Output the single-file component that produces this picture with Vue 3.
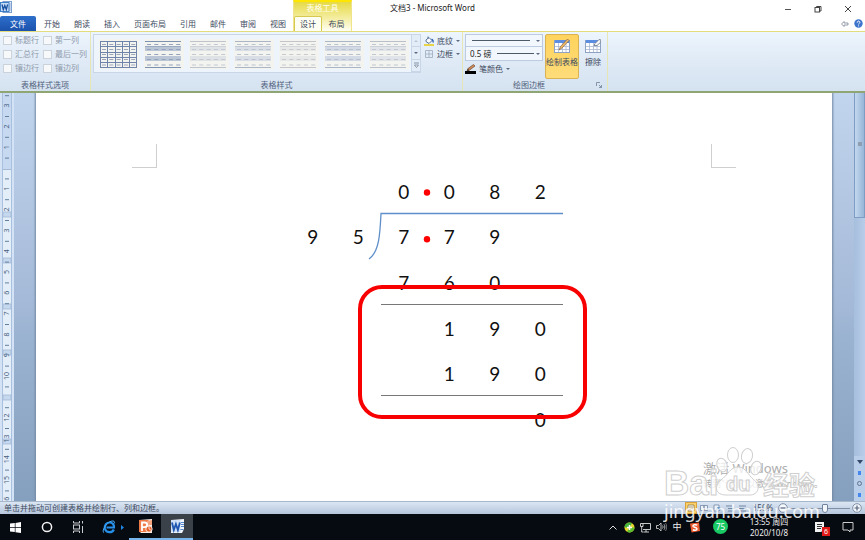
<script setup>
import { ref } from 'vue'

const tabs = ['开始', '朗读', '插入', '页面布局', '引用', '邮件', '审阅', '视图']
const options = ['标题行', '第一列', '汇总行', '最后一列', '镶边行', '镶边列']
const weight = ref('0.5')

const thumbs = [
  { grid: true, line: '#6f84ab', band: 'none', dash: '#9aa5b8' },
  { line: '#7c90b0', band: '#bac5d6', dash: '#94a3bb' },
  { line: '#bfc4cc', band: '#dfe3e6', dash: '#c3c9d2' },
  { line: '#abb5c5', band: '#d9dee6', dash: '#b9c2cf' },
  { line: '#c3c5c9', band: '#e6e7e7', dash: '#c6c9ce' },
  { line: '#a9b6ca', band: '#d3dae5', dash: '#b7c0ce' },
  { line: '#b9c0cb', band: '#e0e4e8', dash: '#c0c7d1' }
]

const rulerOrigin = 75
const rulerUnit = 20.8
const rulerNumbers = [-3, -2, -1, 1, 2, 3, 4, 5, 6, 7, 8, 9, 10, 12, 13, 14, 15, 16]
const rulerTicks = Array.from({ length: 20 }, (_, i) => i - 4 + 0.5)
const rulerMarkers = [119, 165, 211, 257, 302, 346]

const rows = [
  ['', '', '0', '0', '8', '2'],
  ['9', '5', '7', '7', '9', ''],
  ['', '', '7', '6', '0', ''],
  ['', '', '', '1', '9', '0'],
  ['', '', '', '1', '9', '0'],
  ['', '', '', '', '', '0']
]
</script>

<template>
  <div class="window">
    <header class="head">
      <div class="app-mark">
        <svg width="12" height="12" viewBox="0 0 12 12">
          <rect x="3" y="0.5" width="8.5" height="11" fill="#eef4fc" stroke="#7d9fd0" />
          <path d="M9 3h2M9 5h2M9 7h2M9 9h2" stroke="#7d9fd0" stroke-width="0.8" />
          <rect x="0.5" y="1.5" width="8.5" height="9" fill="#c6dcf6" stroke="#3f7fc8" />
          <path d="M2 3.5l1.3 5L4.8 4.5l1.5 4 1.3-5" fill="none" stroke="#174f9e" stroke-width="1.3" />
        </svg>
      </div>
      <h1 class="title">文档3 - Microsoft Word</h1>
      <nav class="tabs">
        <button class="tab file">文件</button>
        <button v-for="t in tabs" :key="t" class="tab">{{ t }}</button>
      </nav>
      <div class="context">
        <span class="context-name">表格工具</span>
        <div class="context-tabs">
          <button class="tab current">设计</button>
          <button class="tab">布局</button>
        </div>
      </div>
      <div class="controls">
        <button aria-label="最小化"><svg width="8" height="8" viewBox="0 0 8 8"><path d="M1 4.5h6" stroke="#555" /></svg></button>
        <button aria-label="还原"><svg width="8" height="8" viewBox="0 0 8 8" fill="none" stroke="#444"><path d="M2.5 2V1.5h4.500v4.500H6" /><rect x="1" y="2.500" width="4.500" height="4.500" /></svg></button>
        <button aria-label="关闭"><svg width="8" height="8" viewBox="0 0 8 8"><path d="M1 1l6 6M7 1L1 7" stroke="#444" /></svg></button>
      </div>
      <div class="help">
        <button aria-label="功能区最小化"><svg width="8" height="8" viewBox="0 0 8 8"><path d="M.5 4l2.500-2.500v1.500h4v2H3v1.500z" fill="#fff" stroke="#7b8696" stroke-width="0.8" /></svg></button>
        <button aria-label="帮助"><svg width="9" height="9" viewBox="0 0 9 9"><circle cx="4.500" cy="4.500" r="4.200" fill="#3d74cc" /><path d="M3.200 3.600c0-2 2.800-1.900 2.700-.200C5.800 4.400 4.600 4.300 4.600 5.500M4.600 6.400v1" fill="none" stroke="#fff" stroke-width="1" /></svg></button>
      </div>
    </header>

    <section class="ribbon">
      <div class="group">
        <div class="options">
          <label v-for="o in options" :key="o" class="option"><input type="checkbox" />{{ o }}</label>
        </div>
        <h2>表格样式选项</h2>
      </div>

      <div class="group styles">
        <div class="row">
          <div class="gallery">
            <button v-for="(s, i) in thumbs" :key="i" class="thumb" :aria-label="'表格样式 ' + (i + 1)">
              <svg width="40" height="30" viewBox="0 0 40 30">
                <rect width="40" height="30" fill="#f3f4f0" />
                <template v-if="!s.grid">
                  <rect x="1" y="7" width="36" height="5" :fill="s.band" />
                  <rect x="1" y="17" width="36" height="5" :fill="s.band" />
                  <path d="M1 2.500h36M1 28.500h36" :stroke="s.line" />
                  <path d="M1 7.500h36" :stroke="s.line" stroke-opacity="0.5" />
                </template>
                <path v-else d="M1 2.500h37M1 7.500h37M1 13.500h37M1 18.500h37M1 23.500h37M1 28.500h37M1.500 2v27M8.500 2v27M16.500 2v27M23.500 2v27M30.500 2v27M37.500 2v27" :stroke="s.line" />
                <path d="M3 5.500h35M3 10.500h35M3 15.500h35M3 20.500h35M3 26h35" :stroke="s.dash" stroke-dasharray="4 3.300" />
              </svg>
            </button>
            <div class="scroller">
              <button aria-label="上一行"><i class="caret up faint"></i></button>
              <button aria-label="下一行"><i class="caret"></i></button>
              <button aria-label="其他"><svg width="5" height="6" viewBox="0 0 5 6"><path d="M0 1h5M.5 3h4L2.500 5.500z" fill="#fff" stroke="#6d7d94" stroke-width="0.8" /></svg></button>
            </div>
          </div>
          <div class="stack">
            <button class="tool">
              <svg width="10" height="10" viewBox="0 0 10 10"><path d="M2 4l3-2.500 3 3-3 3-3-2z" fill="#fff" stroke="#56719b" /><path d="M4 3V.5" stroke="#56719b" /><path d="M7.500 3.500c1.500 0 1.800 1.500 1.500 3" fill="none" stroke="#2f62b0" stroke-width="1.400" /><rect y="8" width="10" height="2" fill="#e8d44a" /></svg>
              底纹<i class="caret"></i>
            </button>
            <button class="tool">
              <svg width="10" height="10" viewBox="0 0 10 10"><path d="M1.500 1.500h7v7h-7zM5 1v8M1 5h8" fill="none" stroke="#aab7c9" /></svg>
              边框<i class="caret"></i>
            </button>
          </div>
        </div>
        <h2>表格样式</h2>
      </div>

      <div class="group">
        <div class="row pens">
          <div class="pen-stack">
            <label class="picker">
              <select aria-label="笔样式"><option></option></select>
              <span class="sample wide"></span><i class="caret"></i>
            </label>
            <label class="picker">
              <select v-model="weight" aria-label="笔划粗细"><option value="0.5">0.5 磅</option></select>
              <span class="sample"></span><i class="caret"></i>
            </label>
            <button class="tool pen">
              <svg width="11" height="10" viewBox="0 0 11 10"><path d="M2 7l1-2.500L8.500.5 10 2 4 6.500z" fill="#d18a52" stroke="#6b4a3c" stroke-width="0.700" /><path d="M2 7l1-2.500 1 2z" fill="#333" /><rect y="7" width="11" height="3" fill="#000" /></svg>
              笔颜色<i class="caret"></i>
            </button>
          </div>
          <button class="big active">
            <svg width="16" height="16" viewBox="0 0 16 16"><rect x=".5" y="2.500" width="15" height="12" fill="#fff" stroke="#8ea3c4" /><rect x="1" y="2" width="14" height="3" fill="#5b8ee0" /><path d="M1 8.500h14M1 11.500h14M4.500 5v9M8.500 5v9M12 5v9" stroke="#a8b7d2" stroke-width=".8" /><path d="M5 12l1.500-3.500L13.500 1 15 2.500 8 10z" fill="#eebb68" stroke="#8a633a" stroke-width=".7" /></svg>
            绘制表格
          </button>
          <button class="big">
            <svg width="16" height="16" viewBox="0 0 16 16"><rect x=".5" y="2.500" width="15" height="12" fill="#fff" stroke="#8ea3c4" /><rect x="1" y="2" width="12" height="3" fill="#5b8ee0" /><path d="M1 8.500h14M1 11.500h14M4.500 5v9M8.500 5v9M12 5v9" stroke="#a8b7d2" stroke-width=".8" /><path d="M9 7.500L10 5.500 14 1.500l2 .5-.5 2.500-3.500 3z" fill="#f4f6fa" stroke="#6a7585" stroke-width=".8" /></svg>
            擦除
          </button>
        </div>
        <h2 class="with-launcher"><span>绘图边框</span>
          <button class="launcher" aria-label="边框和底纹"><svg width="6" height="6" viewBox="0 0 6 6"><path d="M.5 4V.5H4M3 3l2.500 2.500M5.500 3v2.500H3" fill="none" stroke="#7c8ba2" stroke-width=".9" /></svg></button>
        </h2>
      </div>
    </section>

    <main class="work">
      <div class="ruler">
        <svg width="14" height="100%">
          <rect x="3" width="8" height="76" fill="#c6d9f1" />
          <rect x="3" y="76" width="8" height="100%" fill="#e4eef9" />
          <path d="M2.500 0v1000M11.500 0v1000" stroke="#a9c0de" />
          <path d="M3 76.500h8" stroke="#a3b9d6" />
          <g v-for="m in rulerMarkers" :key="m">
            <rect x="3" :y="m" width="8" height="5" fill="#c6d8ee" stroke="#a3b9d6" stroke-width=".8" />
          </g>
          <rect v-for="t in rulerTicks" :key="'t' + t" x="5" :y="rulerOrigin + t * rulerUnit" width="4" height="1" fill="#63809f" />
          <text v-for="n in rulerNumbers" :key="n" :transform="`translate(9 ${rulerOrigin + n * rulerUnit}) rotate(-90)`" text-anchor="middle">{{ Math.abs(n) }}</text>
        </svg>
      </div>
      <div class="canvas">
        <article class="page">
          <div class="corners"><span class="corner left"></span><span class="corner right"></span></div>
          <div class="sheet">
            <div class="division">
              <table>
                <tbody>
                  <tr v-for="(r, i) in rows" :key="i">
                    <td v-for="(d, j) in r" :key="j" :class="{ rule: (i === 2 || i === 4) && j > 1 }">{{ d }}</td>
                  </tr>
                </tbody>
              </table>
              <svg class="marks" width="300" height="274" viewBox="0 0 300 274" fill="none">
                <path d="M273 45.500H91C90 67 89 84 79 91" stroke="#5f8fc9" stroke-width="1.300" />
                <circle cx="137" cy="24.500" r="3.200" fill="#f00" />
                <circle cx="137" cy="71.300" r="3.200" fill="#f00" />
                <rect x="70" y="119" width="225" height="130" rx="22" stroke="#f80000" stroke-width="4" />
              </svg>
            </div>
          </div>
        </article>
      </div>
      <div class="scrollbar">
        <div class="handle"><span></span></div>
        <div class="scroll-end">
          <button aria-label="向下滚动"><i class="caret large"></i></button>
          <button aria-label="前一页"><span class="dot"></span></button>
          <button aria-label="选择浏览对象"><span class="ring"></span></button>
          <button aria-label="下一页"><span class="dot"></span></button>
        </div>
      </div>
    </main>

    <footer class="status">
      <span>单击并拖动可创建表格并绘制行、列和边框。</span>
      <div class="views">
        <button class="view on" aria-label="页面视图"><svg width="8" height="8" viewBox="0 0 8 8"><path d="M1 1h6v6H1zM2 3h4M2 5h4" fill="#fff" stroke="#8a7440" stroke-width=".8" /></svg></button>
        <button class="view" aria-label="阅读版式"><svg width="8" height="8" viewBox="0 0 8 8"><path d="M.5 1.500H4v5H.5zM4 1.500h3.500v5H4z" fill="#eef3fa" stroke="#7287a4" stroke-width=".8" /></svg></button>
        <button class="view" aria-label="Web 版式"><svg width="8" height="8" viewBox="0 0 8 8"><path d="M1 1h5v6H1z" fill="#eef3fa" stroke="#7287a4" stroke-width=".8" /><circle cx="5.500" cy="5" r="2" fill="#5d8fc7" /></svg></button>
        <button class="view" aria-label="大纲视图"><svg width="8" height="8" viewBox="0 0 8 8"><path d="M0 2h6M2 4.500h6M2 7h6" stroke="#7287a4" /></svg></button>
        <button class="view" aria-label="草稿"><svg width="8" height="8" viewBox="0 0 8 8"><path d="M0 2h7M0 4.500h8M0 7h7" stroke="#7287a4" /></svg></button>
        <button class="percent">150%</button>
        <button class="round" aria-label="缩小"><svg width="10" height="10" viewBox="0 0 10 10"><circle cx="5" cy="5" r="4.300" fill="#f5f8fc" stroke="#7f8fa6" /><path d="M2.500 5h5" stroke="#56657c" stroke-width="1.200" /></svg></button>
        <input class="zoom" type="range" min="0" max="100" value="59" aria-label="显示比例" />
        <button class="round" aria-label="放大"><svg width="10" height="10" viewBox="0 0 10 10"><circle cx="5" cy="5" r="4.300" fill="#f5f8fc" stroke="#7f8fa6" /><path d="M2.500 5h5M5 2.500v5" stroke="#56657c" stroke-width="1.200" /></svg></button>
      </div>
    </footer>

    <footer class="taskbar">
      <div class="launch">
        <button aria-label="开始"><svg width="11" height="11" viewBox="0 0 11 11"><path d="M0 1.600L4.800 1v4.200H0zM5.500.9L11 0v5.200H5.500zM0 5.900h4.800V10L0 9.400zM5.500 5.900H11V11l-5.500-.8z" fill="#fff" /></svg></button>
        <button aria-label="搜索"><svg width="12" height="12" viewBox="0 0 12 12"><circle cx="6" cy="6" r="4.600" fill="none" stroke="#f2f2f2" stroke-width="1.500" /></svg></button>
        <button aria-label="任务视图"><svg width="12" height="12" viewBox="0 0 12 12" fill="none" stroke="#c9ccd0"><path d="M1.500 0v2h6V0M1.500 12v-2h6v2" /><rect x="1.500" y="4" width="6" height="4" /><path d="M10.500 0v2.500M10.500 5v7" /></svg></button>
        <button class="browser" aria-label="浏览器">
          <svg width="14" height="14" viewBox="0 0 14 14" fill="none"><path d="M11.800 9.500C10.500 13 4.500 13.300 3 9 1.800 5 5 2.500 7.600 2.500c3 0 4.700 2.500 4.400 5H4.500" stroke="#268fe8" stroke-width="2.200" /><path d="M2 12.800C-.8 11.200 4 3 9 1.300c3-1 4 .3 3.200 2.200" stroke="#45a9f4" stroke-width="1" /></svg>
          <svg width="3" height="5" viewBox="0 0 3 5"><path d="M0 0l3 2.500L0 5z" fill="#2187e6" /></svg>
        </button>
        <button class="open" aria-label="PowerPoint"><svg width="15" height="15" viewBox="0 0 15 15"><path d="M1 1l13-1v14H3l-2-2z" fill="#fbeee6" /><path d="M1 1h9.500v12H1z" fill="#ee7a48" /><path d="M9 2l5-1v5H9z" fill="#f3a47f" /><circle cx="11" cy="10" r="3.200" fill="#e5622d" stroke="#fff" stroke-width=".8" /><path d="M11 10V7M11 10l2.500 1.500" stroke="#fff" stroke-width=".7" /><path d="M4 12V3.500h2.500c3.500 0 3.500 4.700 0 4.700H4" fill="none" stroke="#fff" stroke-width="1.800" /></svg></button>
        <button class="open selected" aria-label="Word"><svg width="15" height="15" viewBox="0 0 15 15"><path d="M1 1l13-1v10l-2 4H1z" fill="#f2f7fd" /><path d="M11 3.500h3M11 5.500h3M11 7.500h3M9.500 10.500h4" stroke="#5688cf" /><path d="M1 1h9.500v12H1z" fill="#cfe0f6" /><path d="M2 3.500l1.800 7.500L5.900 5l2 6 2-7.500" fill="none" stroke="#1e56b0" stroke-width="1.800" /></svg></button>
      </div>
      <div class="tray">
        <button aria-label="显示隐藏的图标"><svg width="8" height="5" viewBox="0 0 8 5"><path d="M.5 4.500L4 1l3.500 3.500" fill="none" stroke="#ddd" /></svg></button>
        <button aria-label="安全卫士"><svg width="11" height="11" viewBox="0 0 11 11"><circle cx="5.500" cy="5.500" r="5" fill="#ead72a" /><path d="M.5 5.500A5 5 0 0 1 8 1.200L5.500 5.500z" fill="#42b33c" /><path d="M10.500 5.500A5 5 0 0 1 3 9.800l2.500-4.300z" fill="#5bbd2e" /><path d="M5.500 3v5M3 5.500h5" stroke="#fff" stroke-width="1.500" /></svg></button>
        <button aria-label="网络"><svg width="11" height="11" viewBox="0 0 11 11" fill="none" stroke="#ddd" stroke-width=".9"><path d="M3 1.500h7.500v6H3M6 8v2M4 10h5M.5 1.500H3v3H.5zM1.700 4.500V10h2" /></svg></button>
        <button aria-label="音量"><svg width="11" height="10" viewBox="0 0 11 10" fill="none" stroke="#ccc" stroke-width=".9"><path d="M.5 3.500h2L5 1v8L2.500 6.500h-2zM6.500 3.500c.7 1 .7 2 0 3M8 2.300c1.200 1.700 1.200 3.700 0 5.400" /><path d="M9.500 1c1.600 2.500 1.600 5.500 0 8" stroke="#777" /></svg></button>
        <button class="ime" aria-label="输入法">中</button>
        <button class="sogou" aria-label="搜狗"><svg width="10" height="11" viewBox="0 0 10 11"><path d="M0 1.500L9 .5l1 8.500-8.500 1.500z" fill="#ee5a2e" /><path d="M7.300 3.200C5.500 2.300 2.800 2.500 3 4.200 3.300 5.500 6.800 5 7 6.800 7.100 8.400 4.700 8.700 2.800 7.800" fill="none" stroke="#fff" stroke-width="1.500" /></svg></button>
        <button class="score">75</button>
        <button class="clock"><span>13:55 周四</span><span>2020/10/8</span></button>
        <button class="news" aria-label="资讯">
          <svg width="11" height="12" viewBox="0 0 11 12"><path d="M1 1h9v8L7 11H1z" fill="#f2f2f2" /><path d="M3 3.500h5M3 5.500h5M3 7.500h4" stroke="#333" /></svg>
          <b>6</b>
        </button>
        <button class="bubble" aria-label="通知"><svg width="12" height="12" viewBox="0 0 12 12"><path d="M1 1.500h10v7.500H8V11L6 9H1z" fill="none" stroke="#ccc" /></svg></button>
      </div>
    </footer>

    <div class="watermark">
      <div class="activate"><p>激活 Windows</p><p>转到"设置"以激活 Windows。</p></div>
      <svg class="brand" width="156" height="54" viewBox="0 0 156 54" fill="#fff" fill-opacity=".75" stroke="#cfcfcf" stroke-width="1">
        <ellipse cx="69" cy="8" rx="5.500" ry="7.500" />
        <ellipse cx="83" cy="9" rx="5.500" ry="7.500" transform="rotate(12 83 9)" />
        <ellipse cx="58" cy="18" rx="5" ry="7" transform="rotate(-20 58 18)" />
        <ellipse cx="92" cy="21" rx="5" ry="7" transform="rotate(20 92 21)" />
        <path d="M74 20c8 0 10 8 15 12 9 7 5 16-3 16-6 0-18 0-24 0-10 0-13-8-5-15 7-5 9-13 17-13z" />
        <text x="0" y="48" class="latin">Bai</text>
        <text x="62" y="44" class="du">du</text>
        <text x="99" y="48" class="han">经验</text>
      </svg>
      <p class="site">jingyan.baidu.com</p>
    </div>
  </div>
</template>

<style>
body { margin: 0; }
</style>

<style scoped>
* { box-sizing: border-box; }
.window {
  position: relative;
  display: flex;
  flex-direction: column;
  min-height: 100vh;
  overflow: hidden;
  background: #fff;
  color: #3d4a60;
  font: 8px/12px "Noto Sans", "Noto Sans CJK SC", sans-serif;
}
h1, h2, p { margin: 0; font: inherit; }
button {
  display: inline-flex;
  align-items: center;
  justify-content: center;
  margin: 0;
  padding: 0;
  border: 0;
  background: none;
  color: inherit;
  font: inherit;
  white-space: nowrap;
}
svg { display: block; flex: none; }

.head {
  display: grid;
  grid-template-columns: auto auto 1fr;
  grid-template-rows: 16px 15px;
}
.app-mark { grid-area: 1 / 1; padding: 1px 0 0; }
.title { grid-area: 1 / 1 / 2 / 4; justify-self: center; padding-top: 2px; color: #222; }
.tabs { grid-area: 2 / 1; display: flex; }
.tab { height: 15px; padding: 0 7px; }
.file { width: 36px; margin-right: 1px; border-radius: 2px 2px 0 0; background: linear-gradient(#2d6fcb, #1b52ac); color: #fff; }
.context {
  grid-area: 1 / 2 / 3 / 3;
  display: grid;
  grid-template-rows: 14px 15px;
  border: solid #f0e48a;
  border-width: 2px 1px 0;
  border-top-color: #ffe600;
  background: linear-gradient(#e6da45, #f4eda0 55%, #fffef4);
}
.context-name { text-align: center; color: #fffef0; }
.context-tabs { display: flex; }
.context-tabs .tab { width: 29px; padding: 0; }
.context-tabs .current { width: 28px; border: solid #d5c94f; border-width: 1px 1px 0; border-radius: 2px 2px 0 0; background: #fffef2; }
.controls { grid-area: 1 / 3; display: flex; justify-content: flex-end; padding: 2px 2px 0 0; }
.controls button { width: 30px; }
.help { grid-area: 2 / 3; display: flex; justify-content: flex-end; gap: 5px; padding-right: 2px; }

.ribbon {
  display: flex;
  height: 62px;
  border-top: 1px solid #e3dc7d;
  border-bottom: 2px solid #8fa573;
  background: linear-gradient(#edf5fd, #dfeaf6 50%, #d5e2f0);
}
.group {
  display: flex;
  flex-direction: column;
  justify-content: space-between;
  border-right: 1px solid #e6e5b4;
  padding: 2px 2px 0;
}
.group h2 { height: 12px; text-align: center; color: #50617c; }
.options { display: grid; grid-template-columns: 40px auto; row-gap: 2px; padding: 0 1px; color: #8f9aab; }
.option { display: flex; align-items: center; gap: 3px; height: 12px; white-space: nowrap; }
.option input { appearance: none; width: 9px; height: 9px; margin: 0; border: 1px solid #ccd2da; background: #f7f8f9; }
.row { display: flex; }
.styles .row { gap: 3px; }
.gallery { display: flex; padding-left: 2px; border: 1px solid #c8d6e8; background: #edf4fc; }
.thumb { width: 45px; height: 37px; }
.scroller { display: grid; width: 9px; grid-template-rows: 1fr 1fr 1fr; border-left: 1px solid #c8d6e8; }
.scroller button { border-bottom: 1px solid #c8d6e8; background: #e3edf8; }
.caret { width: 0; height: 0; border: solid transparent; border-width: 2px 2px 0; border-top-color: #5a6880; }
.caret.up { transform: rotate(180deg); }
.caret.faint { opacity: 0.3; }
.caret.large { border-width: 4px 3px 0; border-top-color: #34486a; }
.stack { display: flex; flex-direction: column; padding-right: 1px; }
.tool { gap: 3px; height: 13px; width: 35px; justify-content: flex-start; }
.pens { gap: 2px; }
.pen-stack { display: flex; flex-direction: column; width: 78px; }
.picker { display: flex; align-items: center; gap: 2px; height: 13px; padding-right: 2px; border: 1px solid #bccbe0; background: #f2f7fd; }
.picker + .picker { height: 14px; border-top: 0; }
.picker select { appearance: none; flex: 1; min-width: 0; height: 12px; margin: 0; padding: 0 0 0 4px; border: 0; background: none; color: #222; font: inherit; }
.sample { width: 37px; height: 1px; background: #4f5a69; }
.sample.wide { width: 58px; margin-right: 4px; }
.tool.pen { width: 50px; height: 15px; }
.big { flex-direction: column; justify-content: flex-start; gap: 2px; width: 24px; height: 45px; padding-top: 4px; border-radius: 2px; }
.big.active { width: 34px; border: 1px solid #d9b352; background: linear-gradient(#ffd35d, #ffdc7a); padding-top: 3px; }
.with-launcher { display: grid; grid-template-columns: 1fr 12px; }

.work { display: flex; flex: 1; min-height: 0; }
.ruler { width: 14px; overflow: hidden; background: #d3e2f5; display: grid; contain: size; }
.ruler text { fill: #44607f; font-size: 7px; }
.canvas {
  display: flex;
  flex: 1;
  padding: 0 22px;
  background: linear-gradient(#c2d5ee, #a4b9d7 52%, #9ab3d0 60%, #859fbe);
}
.page { flex: 1; background: #fff; box-shadow: 0 0 2px 1px #7389a3; clip-path: inset(0 -4px); padding: 51px 96px 0; }
.corners { display: flex; justify-content: space-between; }
.corner { width: 25px; height: 24px; border: 0 solid #cfcfcf; border-bottom-width: 1px; }
.corner.left { border-right-width: 1px; }
.corner.right { border-left-width: 1px; }
.sheet { display: flex; justify-content: center; padding-right: 15px; }
.division { position: relative; }
table { width: 273px; height: 274px; table-layout: fixed; border-collapse: collapse; }
td { padding: 3px 0 0; border-bottom: 1px solid transparent; text-align: center; color: #111; font: 19px/24px Lato, sans-serif; }
td.rule { border-bottom-color: #777; }
.marks { position: absolute; left: 0; top: 0; }
.scrollbar { display: flex; flex-direction: column; justify-content: space-between; width: 11px; background: linear-gradient(90deg, #a6bfdd, #b8cde8); }
.handle { display: grid; place-items: center; height: 125px; padding-bottom: 22px; border: 1px solid #7f9cc2; border-top: 0; background: linear-gradient(90deg, #c3d8ef, #98b6d8); }
.handle span { width: 4px; height: 4px; background: #8e9eb2; }
.scroll-end { display: flex; flex-direction: column; padding-bottom: 1px; background: #b9cee9; }
.scroll-end button { height: 11px; }
.dot { width: 3px; height: 4px; background: #4587ee; }
.ring { width: 5px; height: 5px; border: 1px solid #62748e; border-radius: 50%; }

.status {
  display: flex;
  align-items: center;
  justify-content: space-between;
  height: 13px;
  padding: 0 2px 0 4px;
  border-top: 1px solid #a7b7cb;
  background: linear-gradient(#dbe6f3, #b6c6dc);
}
.views { display: flex; align-items: center; gap: 1px; }
.view { width: 12px; height: 12px; }
.view.on { background: #fbd16b; border: 1px solid #d9a23c; }
.percent { width: 26px; }
.round { width: 12px; }
.zoom { appearance: none; width: 60px; height: 10px; margin: 0; background: linear-gradient(#7f8fa6, #7f8fa6) center / 100% 1px no-repeat; }
.zoom::-webkit-slider-thumb { appearance: none; width: 6px; height: 9px; border: 1px solid #71829b; border-radius: 1px 1px 3px 3px; background: #f2f6fb; }

.taskbar { display: flex; justify-content: space-between; height: 26px; background: #060a11; color: #eee; }
.launch, .tray { display: flex; }
.launch button { width: 31px; }
.launch .browser { width: 36px; gap: 5px; padding-left: 4px; }
.launch .open { width: 32px; border-bottom: 2px solid #78b5ea; }
.launch .selected { background: #3a4149; }
.tray button { width: 16px; }
.tray .ime { font-size: 9px; }
.tray .sogou { width: 20px; }
.tray .score { width: 15px; height: 15px; margin: 5px 5px 0 8px; border-radius: 50%; background: #18c964; color: #fff; }
.tray .clock { width: 74px; padding-right: 2px; flex-direction: column; line-height: 11px; }
.tray .news { position: relative; width: 24px; }
.news b { position: absolute; right: 1px; bottom: 4px; width: 8px; height: 9px; background: #e01818; color: #fff; font: 7px/9px "Noto Sans", sans-serif; }
.tray .bubble { width: 34px; }

.watermark { position: absolute; right: 45px; bottom: 18px; width: 156px; pointer-events: none; }
.activate { position: absolute; left: 39px; top: 14px; color: #adadad; font-size: 9px; line-height: 15px; white-space: nowrap; }
.activate p:first-child { font-size: 13px; }
.brand { position: relative; overflow: visible; }
.latin { font: bold 35px "Liberation Sans", sans-serif; }
.du { font: bold 20px "Liberation Sans", sans-serif; }
.han { font: bold 26px "Noto Sans CJK SC", sans-serif; }
.site { position: relative; color: #fff; opacity: 0.85; font-size: 18px; line-height: 21px; white-space: nowrap; }
</style>
